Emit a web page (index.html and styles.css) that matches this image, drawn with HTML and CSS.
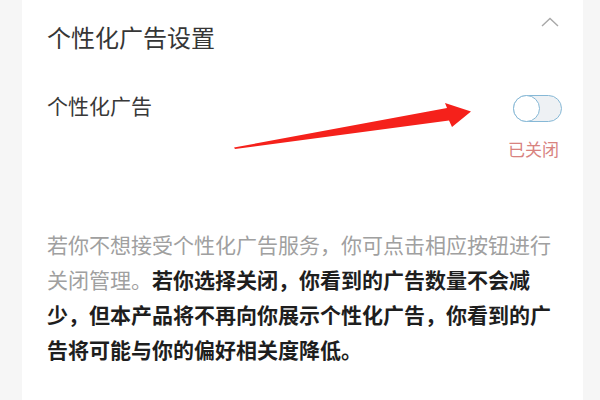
FILE: index.html
```html
<!DOCTYPE html>
<html lang="zh-CN">
<head>
<meta charset="utf-8">
<link rel="stylesheet" href="styles.css">
</head>
<body>
<div class="page">
  <div class="card">
    <div class="header">
      <div class="title">个性化广告设置</div>
      <svg class="chevron" width="18" height="10" viewBox="0 0 18 10"><path d="M1 9 L9 1.5 L17 9" fill="none" stroke="#a8a8a8" stroke-width="1.4"/></svg>
    </div>
    <div class="row">
      <div class="label">个性化广告</div>
      <div class="control">
        <div class="toggle"><div class="knob"></div></div>
        <div class="state">已关闭</div>
      </div>
    </div>
    <p class="desc"><span class="muted">若你不想接受个性化广告服务，你可点击相应按钮进行关闭管理。</span><b class="strong">若你选择关闭，你看到的广告数量不会减少，但本产品将不再向你展示个性化广告，你看到的广告将可能与你的偏好相关度降低。</b></p>
    <svg class="arrow" width="600" height="400" viewBox="0 0 600 400"><polygon points="234,147.5 447,108 445,103 471,111.5 452,127 449,120.5 235,149" fill="#f5211b"/></svg>
  </div>
</div>
</body>
</html>
```

FILE: styles.css
```css
html, body {
  margin: 0;
  padding: 0;
}
body {
  width: 600px;
  height: 400px;
  overflow: hidden;
  background: #f6f6f6;
  font-family: "Noto Sans CJK SC", "Noto Sans", sans-serif;
}
.page {
  padding-left: 22px;
  height: 400px;
}
.card {
  position: relative;
  width: 561px;
  height: 400px;
  background: #ffffff;
  box-sizing: border-box;
  padding: 25px 21px 0 25px;
}
.header {
  display: flex;
  justify-content: space-between;
  align-items: flex-start;
}
.title {
  font-size: 24px;
  line-height: 24px;
  color: #363636;
}
.chevron {
  margin-top: -8px;
  margin-right: 3px;
}
.row {
  display: flex;
  justify-content: space-between;
  align-items: flex-start;
  margin-top: 46px;
}
.label {
  font-size: 21px;
  line-height: 21px;
  color: #383838;
}
.control {
  display: flex;
  flex-direction: column;
  align-items: flex-end;
}
.toggle {
  width: 49px;
  height: 27px;
  box-sizing: border-box;
  border: 1.5px solid #86b8d6;
  border-radius: 14px;
  background: #eef1f4;
  position: relative;
}
.knob {
  width: 27px;
  height: 27px;
  box-sizing: border-box;
  border: 1.5px solid #86b8d6;
  border-radius: 50%;
  background: #ffffff;
  margin: -1.5px 0 0 -1.5px;
}
.state {
  margin-top: 18px;
  margin-right: 3px;
  font-size: 17px;
  line-height: 17px;
  color: #d8837f;
}
.desc {
  margin: 70px 0 0 0;
  font-size: 21px;
  line-height: 35px;
}
.muted {
  color: #a0a0a0;
}
.strong {
  color: #1e1e1e;
  font-weight: bold;
}
.arrow {
  position: absolute;
  left: -22px;
  top: 0;
  pointer-events: none;
}
```
